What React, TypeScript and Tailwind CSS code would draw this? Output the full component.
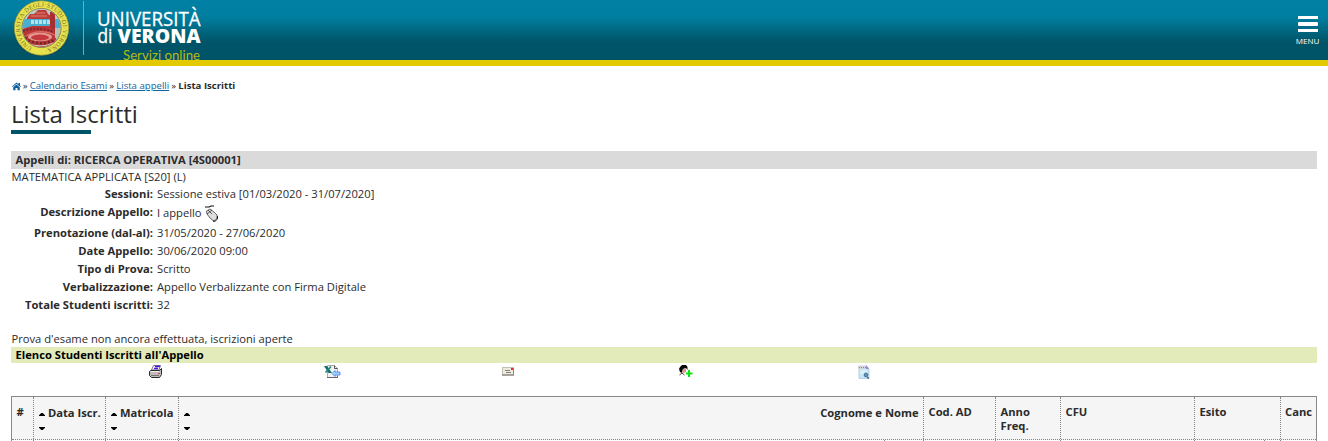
import React from "react";

function Home() {
  return (
    <svg className="block h-[9px] w-[9px]" viewBox="0 0 18 16" fill="#0c5e9e">
      <path d="M9 0L13 3.5V1H16V6L18 8L16.8 9.2L9 2.6L1.2 9.2L0 8Z" />
      <path d="M9 4L15.5 9.5V15.5H11V11H7V15.5H2.5V9.5Z" />
    </svg>
  );
}

function Seal() {
  return (
    <svg className="block h-[60px] w-[68px] shrink-0" viewBox="8 0 68 60">
      <defs>
        <path id="ring" d="M38 49.1 A21.4 21.4 0 1 1 45 49.1" />
        <clipPath id="inner"><circle cx="41.5" cy="28" r="19" /></clipPath>
      </defs>
      <circle cx="41.5" cy="28.6" r="28" fill="#17424c" opacity=".5" />
      <circle cx="41.5" cy="28" r="27.2" fill="#e8e34c" stroke="#9c9b3a" strokeWidth=".7" />
      <circle cx="41.5" cy="28" r="19.6" fill="#b9c0b0" stroke="#77794a" strokeWidth=".8" />
      <g clipPath="url(#inner)">
        <rect x="20" y="8" width="43" height="14" fill="#bfc9c6" />
        <rect x="20" y="19" width="43" height="9" fill="#48afd0" />
        <path d="M27 18 L30 14 H34 L38 10 H46 L48 14 L51 16 V19 H27 Z" fill="#bd3d3b" />
        <path d="M31 16H47M36 13H45" stroke="#dd8272" />
        <path d="M31 22H50" stroke="#b9e0e4" strokeWidth="4" strokeDasharray="3 1" />
        <path d="M51 12L53 9L55 12V38H50V12Z" fill="#a92e32" />
        <path d="M22 29 L32 26 L50 26 L54 30 L56 44 L50 50 H20Z" fill="#b93638" />
        <path d="M23 31 Q38 26 54 32" fill="none" stroke="#77272d" strokeWidth="2" strokeDasharray="2 1.5" />
        <path d="M26 36 Q40 28 55 35" fill="none" stroke="#d96e66" strokeWidth="1.3" />
        <ellipse cx="40" cy="37" rx="12" ry="4.2" fill="#e39a90" />
        <ellipse cx="40" cy="37.5" rx="9" ry="3" fill="#c63a3f" />
        <path d="M25 38 Q40 48 56 39" fill="none" stroke="#6c252b" strokeWidth="2.5" strokeDasharray="2 2" />
        <path d="M28 44 Q41 48 54 43" fill="none" stroke="#c9c3b2" strokeWidth="1.3" />
      </g>
      <text fill="#706f32" fontFamily="Liberation Serif, serif" fontSize="6.2">
        <textPath href="#ring" startOffset="6" textLength="121">UNIVERSITÀ·DEGLI·STUDI·DI·VERONA·</textPath>
      </text>
    </svg>
  );
}

function Logo() {
  return (
    <svg className="block h-[60px] w-[124px] shrink-0 overflow-hidden" viewBox="80 0 124 60">
      <path d="M83.5 1V55" stroke="#6facb9" strokeWidth="1" />
      <g fill="#fff" fontFamily="'Open Sans', sans-serif">
        <text x="97" y="26" textLength="103.5" lengthAdjust="spacingAndGlyphs" fontSize="19.5" stroke="#fff" strokeWidth=".3">UNIVERSITÀ</text>
        <text x="97.5" y="42.5" textLength="15" lengthAdjust="spacingAndGlyphs" fontSize="19.5" stroke="#fff" strokeWidth=".3">di</text>
        <text x="117.5" y="42.5" textLength="83" lengthAdjust="spacingAndGlyphs" fontWeight="800" fontSize="19.5">VERONA</text>
      </g>
      <text x="123" y="59.5" textLength="77" lengthAdjust="spacingAndGlyphs" fill="#b9b914" fontFamily="Lato, sans-serif" fontSize="12.5">Servizi online</text>
    </svg>
  );
}

function Mouse() {
  return (
    <svg className="block h-[17px] w-[14px]" viewBox="0 0 14 17">
      <path d="M0 2H4L6 1H9" fill="none" stroke="#111" strokeWidth="1.2" />
      <path d="M1.5 6L5 4L9 7L12 10V13L10 15.5H8L5 13L2 9Z" fill="#ddd" stroke="#666" />
      <path d="M2 9L7 5M3 5L7 9" stroke="#333" strokeWidth=".8" />
      <path d="M12.5 11V14L10 16.3H8" stroke="#222" fill="none" />
    </svg>
  );
}

function Printer() {
  return (
    <svg className="block h-[13px] w-[14px]" viewBox="0 0 14 13">
      <path d="M4.5 .5H11.5L10 5H2.5Z" fill="#fff" stroke="#77738f" />
      <path d="M6 1.5H11M5 3.5H9" stroke="#4b14d8" strokeWidth="1.3" />
      <path d="M1.5 5.5H10.5L12.5 3.5V9.5L10.5 12.5H2.5L.5 10.5V6.5Z" fill="#c1bcbc" stroke="#2d292b" />
      <path d="M2 6.5H10" stroke="#f2f2f2" /><path d="M2 10.5H10" stroke="#7a7476" />
      <rect x="9" y="8" width="2" height="1" fill="#df3b3b" />
    </svg>
  );
}

function Excel() {
  return (
    <svg className="block h-[13px] w-[17px]" viewBox="0 0 17 13">
      <path d="M3.5.5H10.5L13.5 3.5V12.5H3.5Z" fill="#f0f3f4" stroke="#aaa" />
      <path d="M10.5 .5V3.5H13.5" fill="none" stroke="#555" />
      <path d="M0 1H3L8 8H4.5Z" fill="#176d68" /><path d="M7 1.5L1.5 7.5" stroke="#23847c" strokeWidth="1.6" />
      <path d="M3 12.5H13.5V11" stroke="#666" fill="none" />
      <path d="M8 8.5L11 5.5V7H16V10H11V11.5Z" fill="#8fdcff" stroke="#5e70ee" strokeWidth=".8" />
    </svg>
  );
}

function Envelope() {
  return (
    <svg className="block h-[9px] w-[12px]" viewBox="0 0 12 9">
      <rect x=".5" y=".5" width="11" height="7.5" fill="#eeeadd" stroke="#c4c0b4" />
      <path d="M0 8H12" stroke="#6e6b66" /><path d="M11.5 1V8" stroke="#8f8a82" />
      <path d="M3 3.5H8M4 5.5H9" stroke="#77736e" strokeWidth=".9" />
      <rect x="9" y="1" width="2" height="2" fill="#e72b36" />
    </svg>
  );
}

function AddStudent() {
  return (
    <svg className="block h-[13px] w-[14px]" viewBox="0 0 14 13">
      <path d="M1 2L3 0H7L8.5 2V5L7 3L4 4L3 8L1 7L0 4Z" fill="#080808" />
      <path d="M4 4L7 3V7L5 8L3 7Z" fill="#d99a8b" />
      <path d="M.5 10L3 8L5.5 10" fill="none" stroke="#554349" />
      <path d="M10 5V12M7 8.5H13.5" stroke="#0ce513" strokeWidth="2" />
    </svg>
  );
}

function Report() {
  return (
    <svg className="block h-[15px] w-[12px]" viewBox="0 0 12 15">
      <path d="M1 1H9L11 4V13.5H1Z" fill="#c6e6f4" stroke="#a8cbdc" strokeWidth=".8" />
      <path d="M0 1H9V4H0Z" fill="#d3d3d8" /><path d="M1 2.5H8" stroke="#8a8a98" strokeDasharray="1 1" />
      <path d="M8 0L11 4H8Z" fill="#9686d9" />
      <path d="M2 6H9M2 8H6" stroke="#edf9ff" /><circle cx="8" cy="10" r="1.8" fill="#6299c0" stroke="#446a91" />
      <path d="M9 12L11 13.5" stroke="#3d638a" strokeWidth="1.3" />
    </svg>
  );
}

function Up() {
  return <svg className="mt-[3px] h-[3px] w-[6px] shrink-0" viewBox="0 0 6 3"><path d="M0 3V2.2L2.3 0H3.7L6 2.2V3Z" /></svg>;
}

function Down() {
  return <svg className="block h-[4px] w-[6px]" viewBox="0 0 6 4"><path d="M0 0H6V.8L3.7 3H2.3L0 .8Z" /></svg>;
}

function Detail({ label, children, rowClass = "h-[18px]" }: { label: string; children: React.ReactNode; rowClass?: string }) {
  return (
    <div className={`flex leading-[18px] ${rowClass}`}>
      <div className="w-[142px] shrink-0 text-right font-bold">{label}</div>
      <div className="ml-1 flex">{children}</div>
    </div>
  );
}

const cell = "shrink-0 border-r border-dotted border-[#858585] pl-[4.5px] pt-[8px] leading-[14px]";

export default function App() {
  return (
    <div className="h-[441px] overflow-hidden bg-white font-['Open_Sans',sans-serif] text-[11.2px] text-[#2b2b2b]">
      <header className="flex h-[66px] justify-between border-b-[6px] border-[#e2c900] bg-[linear-gradient(#0080a5_0px,#007e9f_17px,#005468_42px,#005468_60px)] pl-2">
        <div className="flex gap-1"><Seal /><Logo /></div>
        <div className="flex w-[41px] flex-col items-center pt-4 text-white">
          <div className="flex flex-col gap-[3px]">
            <i className="block h-[3px] w-5 bg-white" />
            <i className="block h-[4px] w-5 rounded-[1px] bg-white" />
            <i className="block h-[3px] w-5 bg-white" />
          </div>
          <span className="mt-[4px] text-[8px] leading-[10px]">MENU</span>
        </div>
      </header>

      <main className="ml-[11px] mr-[11px]">
        <nav className="flex h-[30px] items-center gap-[2.2px] pt-[10px] text-[9.6px] whitespace-nowrap">
          <span className="ml-[0.5px]"><Home /></span>
          <span>»</span><a className="text-[#1464a0] underline">Calendario Esami</a>
          <span>»</span><a className="text-[#1464a0] underline">Lista appelli</a>
          <span>»</span><b>Lista Iscritti</b>
        </nav>
        <h1 className="h-[34px] text-[24px] leading-[36px]">Lista Iscritti</h1>
        <div className="h-1 w-20 bg-[#005468]" />

        <div className="mt-[17px] h-[18px] bg-[#dadada] pl-[4.5px] font-bold leading-[18px]">Appelli di: RICERCA OPERATIVA [4S00001]</div>
        <div className="h-[16px] pl-[0.5px] leading-[16px]">MATEMATICA APPLICATA [S20] (L)</div>
        <Detail label="Sessioni:">Sessione estiva [01/03/2020 - 31/07/2020]</Detail>
        <Detail label="Descrizione Appello:" rowClass="h-[21px]">
          <span className="pt-px">I appello</span><span className="ml-[3px] pt-[2px]"><Mouse /></span>
        </Detail>
        <Detail label="Prenotazione (dal-al):">31/05/2020 - 27/06/2020</Detail>
        <Detail label="Date Appello:">30/06/2020 09:00</Detail>
        <Detail label="Tipo di Prova:">Scritto</Detail>
        <Detail label="Verbalizzazione:">Appello Verbalizzante con Firma Digitale</Detail>
        <Detail label="Totale Studenti iscritti:">32</Detail>

        <div className="mt-[17px] h-4 pl-[0.5px] leading-[16px]">Prova d'esame non ancora effettuata, iscrizioni aperte</div>
        <div className="h-4 bg-[#e2ebb9] pl-[4.5px] font-bold leading-[16px] text-black">Elenco Studenti Iscritti all'Appello</div>
        <div className="flex h-[33px] pl-[56px] pt-[2px]">
          <div className="flex w-[177px] justify-center"><Printer /></div>
          <div className="flex w-[176px] justify-center"><Excel /></div>
          <div className="flex w-[176px] justify-center pt-[2px]"><Envelope /></div>
          <div className="flex w-[180px] justify-center"><AddStudent /></div>
          <div className="flex w-[176px] justify-center"><Report /></div>
        </div>
        <div className="h-[45px] w-[1306px] border border-[#898989] border-b-0">
          <div className="flex h-[43px] border-b border-dotted border-[#858585] bg-[#f5f5f5] font-bold whitespace-nowrap">
            <div className={`w-[22px] ${cell}`}>#</div>
            <div className={`w-[72px] ${cell}`}>
              <div className="flex items-center gap-[3.4px] pt-px"><Up />Data Iscr.</div><div className="pt-[7px]"><Down /></div>
            </div>
            <div className={`w-[73px] ${cell}`}>
              <div className="flex items-center gap-[3.4px] pt-px"><Up />Matricola</div><div className="pt-[7px]"><Down /></div>
            </div>
            <div className={`w-[745px] pr-[4.5px] ${cell}`}>
              <div className="flex items-center justify-between pt-px"><Up /><span>Cognome e Nome</span></div><div className="pt-[7px]"><Down /></div>
            </div>
            <div className={`w-[72px] ${cell}`}>Cod. AD</div>
            <div className={`w-[65px] ${cell}`}>Anno<br />Freq.</div>
            <div className={`w-[134px] ${cell}`}>CFU</div>
            <div className={`w-[86px] ${cell}`}>Esito</div>
            <div className="pl-[4px] pt-[8px] leading-[14px]">Canc</div>
          </div>
          <div className="flex h-px">
            <div className="w-[22px] border-r border-[#858585]" />
            <div className="w-[72px] border-r border-[#858585]" />
            <div className="w-[73px] border-r border-[#858585]" />
            <div className="w-[706px] border-r border-[#858585]" />
            <div className="w-[39px] border-r border-[#858585]" />
            <div className="w-[72px] border-r border-[#858585]" />
            <div className="w-[65px] border-r border-[#858585]" />
            <div className="w-[134px] border-r border-[#858585]" />
            <div className="w-[70px] border-r border-[#858585]" />
            <div className="w-[16px] border-r border-[#858585]" />
          </div>
        </div>
      </main>
    </div>
  );
}
